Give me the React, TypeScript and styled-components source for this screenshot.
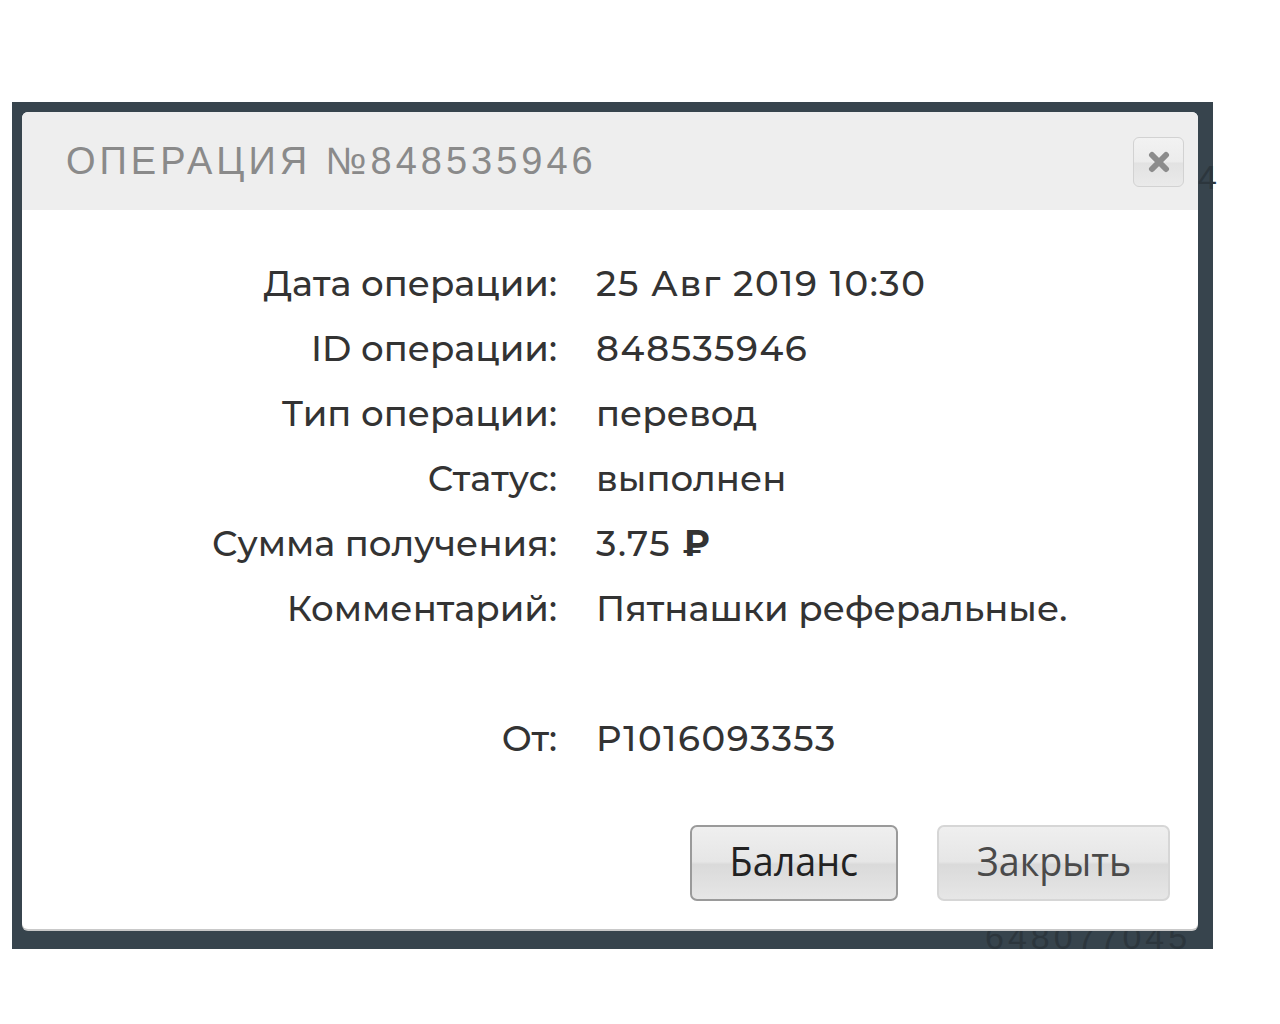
import styled, { createGlobalStyle } from 'styled-components';

const GlobalStyle = createGlobalStyle`
  html, body {
    margin: 0;
    padding: 0;
    background: #ffffff;
  }
`;

const Page = styled.div`
  width: 1280px;
  height: 1024px;
  padding-top: 102px;
  padding-left: 12px;
  box-sizing: border-box;
`;

const Backdrop = styled.div`
  position: relative;
  width: 1201px;
  height: 847px;
  background: #37444d;
  padding: 10px 0 0 10px;
  box-sizing: border-box;
`;

const GhostText = styled.span<{ $top: number; $left: number }>`
  position: absolute;
  top: ${(p) => p.$top}px;
  left: ${(p) => p.$left}px;
  font-family: 'Liberation Sans', Arial, sans-serif;
  font-size: 34px;
  letter-spacing: 4px;
  color: #2c363d;
  line-height: 1;
`;

const Modal = styled.div`
  position: relative;
  width: 1176px;
  height: 817px;
  background: #ffffff;
  border-radius: 6px;
  box-shadow: 0 2px 0 #c9c9c9;
  display: flex;
  flex-direction: column;
  overflow: hidden;
`;

const Header = styled.div`
  height: 98px;
  background: #eeeeee;
  display: flex;
  align-items: center;
  justify-content: space-between;
  padding: 0 14px 0 44px;
  box-sizing: border-box;
`;

const Title = styled.h2`
  margin: 0;
  font-family: 'Liberation Sans', Arial, sans-serif;
  font-weight: 400;
  font-size: 38px;
  letter-spacing: 4px;
  color: #8a8a8a;
`;

const CloseButton = styled.button`
  width: 51px;
  height: 50px;
  margin-top: 2px;
  border: 1px solid #d2d2d2;
  border-radius: 6px;
  background: linear-gradient(#f2f2f2 0%, #ececec 50%, #e2e2e2 52%, #eaeaea 100%);
  display: flex;
  align-items: center;
  justify-content: center;
  padding: 0;
`;

const Body = styled.div`
  flex: 1;
  padding-top: 41px;
  display: flex;
  flex-direction: column;
`;

const Details = styled.div`
  display: grid;
  grid-template-columns: 535px 1fr;
  column-gap: 39px;
  grid-auto-rows: 65px;
  align-items: center;
  font-family: 'Montserrat', 'Noto Sans', 'Open Sans', sans-serif;
  font-size: 35.5px;
  font-weight: 500;
  color: #333333;
`;

const Label = styled.div`
  text-align: right;
`;

const Value = styled.div<{ $numeric?: boolean }>`
  white-space: nowrap;
  letter-spacing: ${(p) => (p.$numeric ? '1.6px' : '0')};
`;

const Spacer = styled.div`
  grid-column: 1 / -1;
`;

const Footer = styled.div`
  margin-top: auto;
  padding: 0 28px 28px 0;
  display: flex;
  justify-content: flex-end;
  gap: 39px;
`;

const Button = styled.button<{ $primary?: boolean; $width: number }>`
  width: ${(p) => p.$width}px;
  height: 76px;
  border-radius: 7px;
  border: 2px solid ${(p) => (p.$primary ? '#9a9a9a' : '#d6d6d6')};
  background: linear-gradient(#efefef 0%, #e6e6e6 48%, #dadada 52%, #e6e6e6 100%);
  font-family: 'Open Sans', 'Noto Sans', sans-serif;
  font-size: 41px;
  color: ${(p) => (p.$primary ? '#222222' : '#4a4a4a')};
  padding: 0 0 6px;
`;

const ButtonText = styled.span`
  display: inline-block;
  transform: scaleX(0.92);
`;

const rows: [string, React.ReactNode, boolean][] = [
  ['Дата операции:', '25 Авг 2019 10:30', true],
  ['ID операции:', '848535946', true],
  ['Тип операции:', 'перевод', false],
  ['Статус:', 'выполнен', false],
  ['Сумма получения:', <>3.75 <b>₽</b></>, true],
  ['Комментарий:', 'Пятнашки реферальные.', false],
];

export default function App() {
  return (
    <Page>
      <GlobalStyle />
      <Backdrop>
        <GhostText $top={58} $left={1186}>4</GhostText>
        <GhostText $top={818} $left={973}>648077045</GhostText>
        <Modal>
          <Header>
            <Title>ОПЕРАЦИЯ №848535946</Title>
            <CloseButton aria-label="close">
              <svg width="22" height="22" viewBox="0 0 22 22">
                <path d="M4 4 L18 18 M18 4 L4 18" stroke="#8c8c8c" strokeWidth="6" strokeLinecap="round" />
              </svg>
            </CloseButton>
          </Header>
          <Body>
            <Details>
              {rows.map(([l, v, n]) => (
                <>
                  <Label key={l}>{l}</Label>
                  <Value $numeric={n}>{v}</Value>
                </>
              ))}
              <Spacer />
              <Label>От:</Label>
              <Value $numeric>P1016093353</Value>
            </Details>
            <Footer>
              <Button $primary $width={208}><ButtonText>Баланс</ButtonText></Button>
              <Button $width={233}><ButtonText>Закрыть</ButtonText></Button>
            </Footer>
          </Body>
        </Modal>
      </Backdrop>
    </Page>
  );
}
